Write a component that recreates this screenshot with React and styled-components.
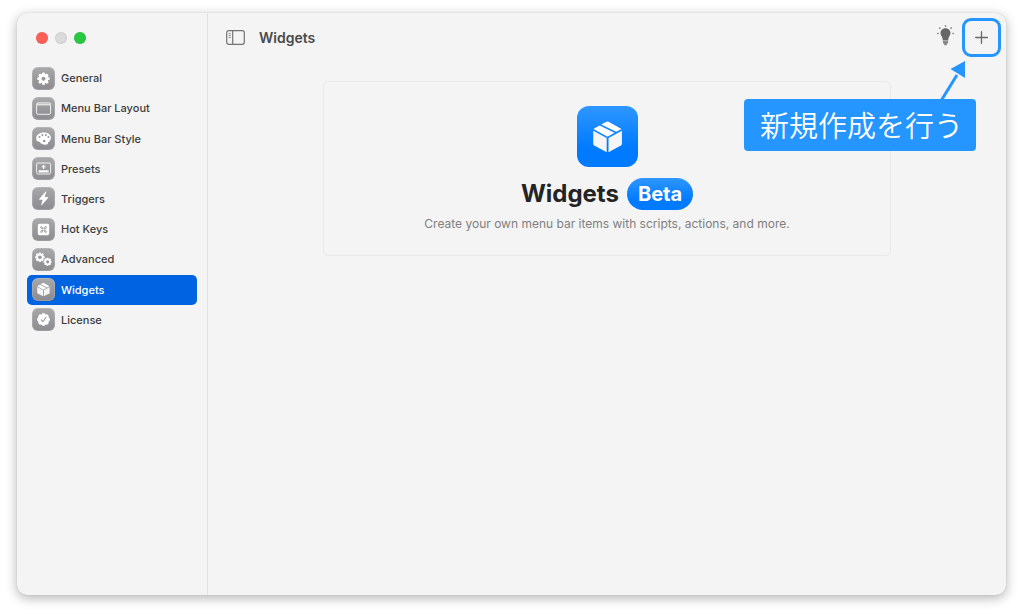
import styled, { createGlobalStyle } from "styled-components";

const GlobalStyle = createGlobalStyle`
  * {
    box-sizing: border-box;
  }
  body {
    margin: 0;
    background: #ffffff;
    font-family: Inter, "Noto Sans CJK JP", sans-serif;
  }
  button {
    margin: 0;
    padding: 0;
    border: 0;
    background: none;
    font: inherit;
    color: inherit;
  }
  svg {
    display: block;
  }
`;

const Desktop = styled.div`
  display: flex;
  min-height: 100vh;
  padding: 13px 18px 21px 17px;
`;

const Window = styled.div`
  display: flex;
  flex: 1;
  border-radius: 10px;
  background: #f4f4f4;
  box-shadow: 0 0 1px rgba(0, 0, 0, 0.2), 0 3px 12px rgba(0, 0, 0, 0.3);
`;

const Sidebar = styled.aside`
  flex: none;
  width: 191px;
  padding: 19px 10px;
  border-right: 1px solid #e3e3e3;
`;

const TrafficLights = styled.div`
  display: flex;
  gap: 7px;
  padding-left: 9px;
  margin-bottom: 19px;
`;

const Light = styled.button`
  width: 12px;
  height: 12px;
  border-radius: 50%;
  background: ${({ $color }) => $color};
  box-shadow: inset 0 0 0 1px rgba(0, 0, 0, 0.06);
`;

const NavList = styled.ul`
  display: grid;
  grid-auto-rows: 1fr;
  min-height: 272px;
  margin: 0;
  padding: 0;
  list-style: none;
`;

const NavButton = styled.button`
  display: flex;
  align-items: center;
  gap: 6px;
  width: 100%;
  height: 100%;
  padding-left: 5px;
  border-radius: 5px;
  font-size: 11px;
  font-weight: 500;
  text-align: left;
  color: ${({ $active }) => ($active ? "#ffffff" : "#3c3c3c")};
  background: ${({ $active }) => ($active ? "#0063e1" : "transparent")};
`;

const NavIcon = styled.span`
  flex: none;
  width: 23px;
  height: 23px;
  border-radius: 6px;
  color: #ffffff;
  background: linear-gradient(#a9a9ab, #8b8b90);
  box-shadow: inset 0 0 0 1px rgba(255, 255, 255, 0.15);
`;

const Main = styled.main`
  flex: 1;
  min-width: 0;
`;

const Toolbar = styled.header`
  display: flex;
  align-items: center;
  padding: 5px 5px 0 18px;
  color: #4a4a4a;
`;

const PageTitle = styled.h1`
  flex: 1;
  margin: 0 0 0 14px;
  font-size: 14px;
  font-weight: 600;
`;

const TipButton = styled.button`
  margin-right: 8px;
  padding-bottom: 4px;
`;

const AddArea = styled.div`
  position: relative;
`;

const AddButton = styled.button`
  display: grid;
  place-items: center;
  width: 39px;
  height: 39px;
  border: 3px solid #2595ff;
  border-radius: 9px;
`;

const Callout = styled.div`
  position: absolute;
  top: 81px;
  right: 25px;
  padding: 0 13px 2px 16px;
  border-radius: 4px;
  font-family: "Noto Sans CJK JP", sans-serif;
  font-size: 29px;
  font-weight: 350;
  line-height: 50px;
  white-space: nowrap;
  color: #ffffff;
  background: #2595ff;
`;

const CalloutArrow = styled.svg`
  position: absolute;
  top: 42px;
  right: 35px;
`;

const Hero = styled.section`
  display: flex;
  flex-direction: column;
  align-items: center;
  max-width: 568px;
  margin: 24px auto 0;
  padding: 24px 16px 22px;
  border: 1px solid #e9e9e9;
  border-radius: 5px;
`;

const HeroIcon = styled.span`
  width: 61px;
  height: 61px;
  border-radius: 12px;
  background: linear-gradient(#2e97ff, #007aff 70%);
`;

const HeroTitle = styled.h2`
  display: flex;
  align-items: center;
  gap: 8px;
  margin: 11px 0 5px;
  font-size: 24px;
  font-weight: 700;
  line-height: 32px;
  color: #242424;
`;

const Badge = styled.span`
  padding: 0 11px;
  border-radius: 16px;
  font-size: 20px;
  color: #ffffff;
  background: linear-gradient(#2e97ff, #007aff 70%);
`;

const HeroText = styled.p`
  margin: 0;
  font-size: 12px;
  line-height: 18px;
  color: #808080;
`;

function Gear({ x, y, r, hole }) {
  const teeth = [0, 45, 90, 135];
  return (
    <g transform={`translate(${x} ${y})`}>
      {teeth.map((angle) => (
        <rect
          key={angle}
          x={-r * 0.22}
          y={-r}
          width={r * 0.44}
          height={r * 2}
          rx={r * 0.12}
          transform={`rotate(${angle})`}
          fill="currentColor"
        />
      ))}
      <circle r={r * 0.78} fill="currentColor" />
      <circle r={hole} fill="#98989b" />
    </g>
  );
}

function Glyph({ children }) {
  return (
    <svg width="23" height="23" viewBox="0 0 23 23" fill="none" aria-hidden="true">
      {children}
    </svg>
  );
}

function BoxShape() {
  return (
    <>
      <path d="M29 15.500Q30 14.900 31 15.500L43.800 22.500 38.500 25.400 23.800 18.200Z" fill="#fff" />
      <path d="M22.200 19.100 36.900 26.400 30.100 30.300 16.200 22.700Z" fill="#fff" />
      <path d="M16 24.300 29.200 31.500V45.400L17 38.900Q16 38.300 16 37.200Z" fill="#f5f5f6" />
      <path d="M44.200 24.300 31 31.500V45.400L43.200 38.900Q44.200 38.300 44.200 37.200Z" fill="#f5f5f6" />
    </>
  );
}

const items = [
  {
    label: "General",
    icon: <Gear x={11.5} y={11.7} r={6.2} hole={2} />,
  },
  {
    label: "Menu Bar Layout",
    icon: (
      <>
        <rect x="4.6" y="5.9" width="14" height="11.4" rx="1.5" stroke="#fff" strokeOpacity="0.85" />
        <path d="M5 7.6H18" stroke="#fff" strokeOpacity="0.7" strokeWidth="1.6" />
      </>
    ),
  },
  {
    label: "Menu Bar Style",
    icon: (
      <>
        <path
          d="M4.2 11.4C4.2 8 7.5 5.6 11.9 5.6c4.2 0 7 2.2 7 4.9 0 2.400-1 3.400-2 4.200-.8.700-1 .8-.9 1.400.3 1.100-.9 1.600-2.800 1.600-2.200 0-4.200-.8-5.400-2.400-.7-1-1.200-.8-1.900-.9-.9-.2-1.700-1.500-1.700-3Z"
          fill="currentColor"
        />
        <g fill="#98989b">
          <circle cx="7.5" cy="9.9" r="1" />
          <circle cx="10.4" cy="8" r="1" />
          <circle cx="13.8" cy="7.9" r="1" />
          <circle cx="16.4" cy="10" r="1" />
          <circle cx="12.200" cy="14" r="1.300" />
        </g>
      </>
    ),
  },
  {
    label: "Presets",
    icon: (
      <>
        <rect x="4.6" y="6" width="14" height="11" rx="1.5" stroke="#fff" strokeOpacity="0.85" />
        <rect x="6.5" y="13.2" width="10.2" height="2.2" rx="0.5" fill="currentColor" />
        <path d="M11.6 7.7 14 10.2H12.2V12H11V10.2H9.2Z" fill="currentColor" />
      </>
    ),
  },
  {
    label: "Triggers",
    icon: (
      <path
        d="M13.6 4.6 7.2 12.1Q6.9 12.7 7.6 12.8H10.7L9.2 17.8Q9.4 18.5 10 18L16.2 10.8Q16.5 10.2 15.8 10.1H12.7L14.3 5Q14.2 4.3 13.6 4.6Z"
        fill="currentColor"
      />
    ),
  },
  {
    label: "Hot Keys",
    icon: (
      <>
        <rect x="5.8" y="5.8" width="11.4" height="11.4" rx="1.6" fill="currentColor" />
        <path
          d="M10.2 9.4V13.6M12.8 9.4V13.6M9.4 10.2H13.6M9.4 12.8H13.6M10.2 10.2H9.3a.9.9 0 1 1 .9-.9ZM12.8 10.2V9.3a.9.9 0 1 1 .9.9ZM10.2 12.8V13.7a.9.9 0 1 1-.9-.9ZM12.8 12.8H13.7a.9.9 0 1 1-.9.9Z"
          stroke="#98989b"
          strokeWidth="0.7"
        />
      </>
    ),
  },
  {
    label: "Advanced",
    icon: (
      <>
        <Gear x={7.9} y={9.2} r={4.8} hole={1.8} />
        <Gear x={15.6} y={13.8} r={4.1} hole={1.6} />
      </>
    ),
  },
  {
    label: "Widgets",
    icon: (
      <g transform="translate(-1.8 -1.7) scale(0.44)">
        <BoxShape />
      </g>
    ),
  },
  {
    label: "License",
    icon: (
      <>
        <g fill="currentColor">
          <circle cx="11.5" cy="11.5" r="5.5" />
          {[0, 45, 90, 135, 180, 225, 270, 315].map((angle) => (
            <circle key={angle} cx="11.5" cy="6.9" r="1.9" transform={`rotate(${angle} 11.5 11.5)`} />
          ))}
        </g>
        <path
          d="M9.2 11.9 10.9 13.7 14 9.3"
          stroke="#98989b"
          strokeWidth="1.1"
          strokeLinecap="round"
          strokeLinejoin="round"
        />
      </>
    ),
  },
];

function SidebarIcon() {
  return (
    <svg width="19" height="15" viewBox="0 0 19 15" fill="none" stroke="#737373" aria-hidden="true">
      <rect x="0.7" y="0.7" width="17.6" height="13.6" rx="2" strokeWidth="1.2" />
      <path d="M6.7 1V14" strokeWidth="1.2" />
      <path d="M2.6 3.6H4.9M2.6 5.6H4.9M2.6 7.6H4.9" strokeWidth="0.8" />
    </svg>
  );
}

function BulbIcon() {
  return (
    <svg width="17" height="21" viewBox="0 0 17 21" fill="#666666" aria-hidden="true">
      <path d="M8.5 3.3c3 0 5 2.2 5 4.8 0 2.4-1.8 3.5-2.1 5.6l-.2 1.7H5.8l-.2-1.7C5.3 11.6 3.5 10.5 3.5 8.1c0-2.6 2-4.8 5-4.8Z" />
      <path d="M5.9 16h5.2v1.4q0 .6-.6.8L10 19.600q-.2.600-.8.600H7.800q-.6 0-.8-.6l-.5-1.4q-.6-.2-.6-.8Z" fillOpacity="0.75" />
      <circle cx="8.5" cy="1.1" r="0.8" />
      <circle cx="2.9" cy="3.1" r="0.8" />
      <circle cx="14.1" cy="3.1" r="0.8" />
      <circle cx="0.9" cy="8.5" r="0.8" />
      <circle cx="16.1" cy="8.5" r="0.8" />
    </svg>
  );
}

export default function App() {
  return (
    <>
      <GlobalStyle />
      <Desktop>
        <Window>
          <Sidebar>
            <TrafficLights>
              <Light $color="#ff5f57" aria-label="Close" />
              <Light $color="#dadada" aria-label="Minimize" />
              <Light $color="#28c840" aria-label="Zoom" />
            </TrafficLights>
            <nav>
              <NavList>
                {items.map((item) => (
                  <li key={item.label}>
                    <NavButton $active={item.label === "Widgets"}>
                      <NavIcon>
                        <Glyph>{item.icon}</Glyph>
                      </NavIcon>
                      {item.label}
                    </NavButton>
                  </li>
                ))}
              </NavList>
            </nav>
          </Sidebar>
          <Main>
            <Toolbar>
              <button aria-label="Toggle sidebar">
                <SidebarIcon />
              </button>
              <PageTitle>Widgets</PageTitle>
              <TipButton aria-label="Tips">
                <BulbIcon />
              </TipButton>
              <AddArea>
                <AddButton aria-label="Add widget">
                  <svg width="13" height="13" viewBox="0 0 13 13" stroke="#666666" strokeWidth="1.3" strokeLinecap="round" aria-hidden="true">
                    <path d="M6.5 0.7V12.3M0.7 6.5H12.3" />
                  </svg>
                </AddButton>
                <CalloutArrow width="26" height="40" viewBox="0 0 26 40" aria-hidden="true">
                  <path d="M1.5 40 17 15" stroke="#2595ff" strokeWidth="3" />
                  <path d="M25 1V18L10.5 9Z" fill="#2595ff" />
                </CalloutArrow>
                <Callout>新規作成を行う</Callout>
              </AddArea>
            </Toolbar>
            <Hero>
              <HeroIcon>
                <svg width="61" height="61" viewBox="0 0 60 60" aria-hidden="true">
                  <BoxShape />
                </svg>
              </HeroIcon>
              <HeroTitle>
                Widgets <Badge>Beta</Badge>
              </HeroTitle>
              <HeroText>Create your own menu bar items with scripts, actions, and more.</HeroText>
            </Hero>
          </Main>
        </Window>
      </Desktop>
    </>
  );
}
